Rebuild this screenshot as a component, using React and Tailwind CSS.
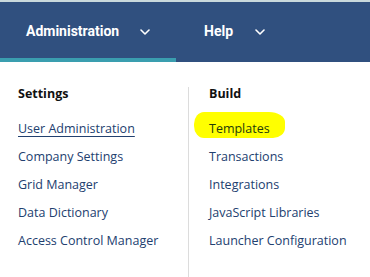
import React from 'react';

const settings = ['User Administration', 'Company Settings', 'Grid Manager', 'Data Dictionary', 'Access Control Manager'];
const build = ['Templates', 'Transactions', 'Integrations', 'JavaScript Libraries', 'Launcher Configuration'];

const Chevron = () => (
  <svg width="10" height="6" viewBox="0 0 10 6" fill="none" stroke="currentColor" strokeWidth="1.6" strokeLinecap="round" strokeLinejoin="round">
    <path d="M1 1l4 4 4-4" />
  </svg>
);

const App = () => {
  return (
    <div className="w-[370px] h-[277px] bg-white overflow-hidden">
      {/* Top nav */}
      <div className="border-t-2 border-[#c9d9dc] bg-[#30507f] h-[62px] flex font-['Roboto',sans-serif] font-bold text-[14px] text-white">
        <div className="w-[176px] flex flex-col">
          <div className="flex-1 flex items-center pl-[26px] pt-[2px]">
            <span>Administration</span>
            <span className="ml-[21px] mt-[2px]"><Chevron /></span>
          </div>
          <div className="h-[4px] bg-[#3a9eaf]"></div>
        </div>
        <div className="flex items-center pl-[28px] pb-[2px]">
          <span>Help</span>
          <span className="ml-[22px] mt-[2px]"><Chevron /></span>
        </div>
      </div>

      {/* Mega menu */}
      <div className="flex font-['Open_Sans',sans-serif] text-[12.5px] font-medium pt-[18px]">
        <div className="w-[188px] pl-[18px]">
          <div className="font-bold text-[#111] leading-[28px] mb-[7px]">Settings</div>
          {settings.map((s, i) => (
            <div key={s} className="leading-[28px] text-[#22406f]">
              <span className={i === 0 ? 'underline underline-offset-[3px]' : ''}>{s}</span>
            </div>
          ))}
        </div>
        <div className="flex-1 border-l border-[#dcdcdc] mt-[7px] pl-[20px] -mb-[40px]">
          <div className="-mt-[7px] font-bold text-[#111] leading-[28px] mb-[7px]">Build</div>
          {build.map((b, i) => (
            <div key={b} className="leading-[28px] text-[#22406f]">
              {i === 0 ? (
                <span className="relative inline-block text-[#243a0a]">
                  <span className="absolute -left-[15px] -right-[15px] top-[-3px] bottom-[5px] bg-[#ffff00] rounded-[10px_16px_12px_10px/12px_10px_10px_12px]"></span>
                  <span className="relative">{b}</span>
                </span>
              ) : b}
            </div>
          ))}
        </div>
      </div>
    </div>
  );
};

export default App;
